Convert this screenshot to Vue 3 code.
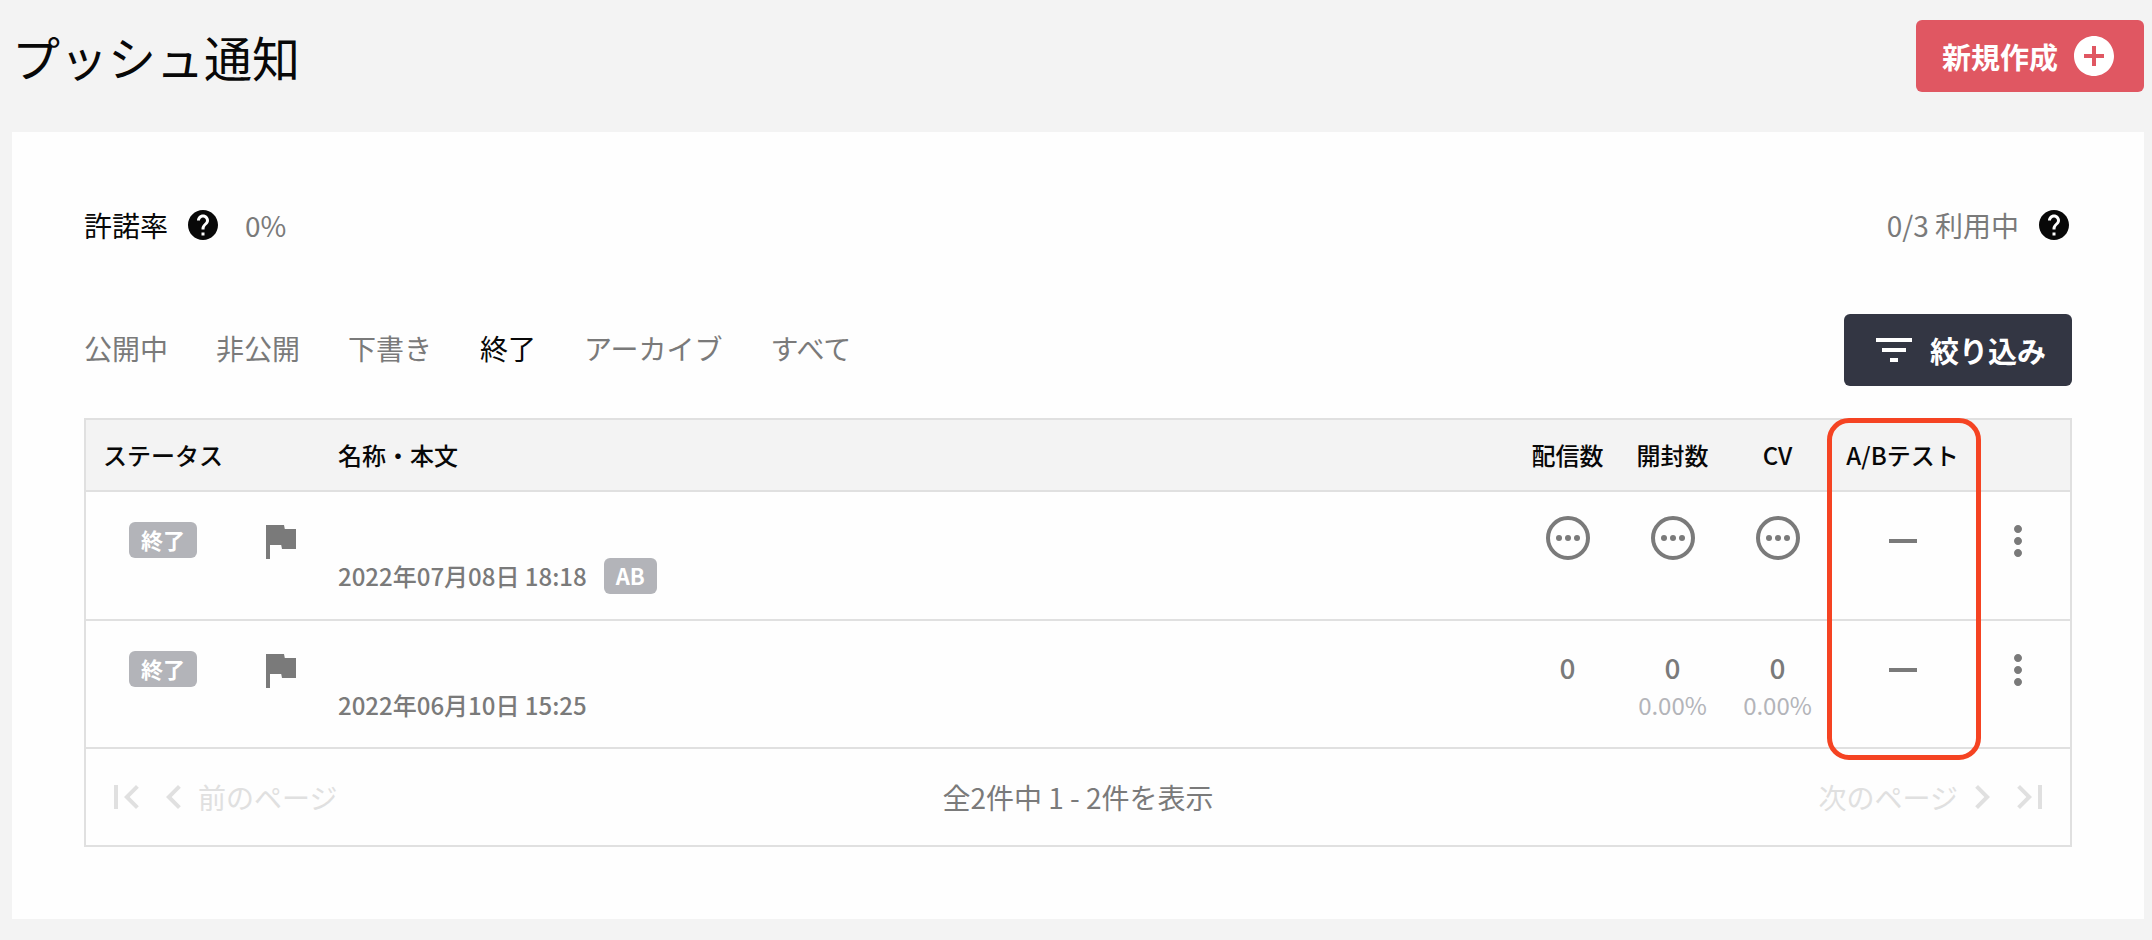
<script setup>
import { ref } from 'vue'

const tabs = ['公開中', '非公開', '下書き', '終了', 'アーカイブ', 'すべて']
const activeTab = ref('終了')

const rows = [
  {
    id: 1,
    status: '終了',
    date: '2022年07月08日 18:18',
    ab: true,
    counts: [
      { pending: true },
      { pending: true },
      { pending: true }
    ]
  },
  {
    id: 2,
    status: '終了',
    date: '2022年06月10日 15:25',
    ab: false,
    counts: [
      { value: '0' },
      { value: '0', rate: '0.00%' },
      { value: '0', rate: '0.00%' }
    ]
  }
]

function selectTab(tab){
  activeTab.value = tab
}
</script>


<template>

<div class="page">

  <header class="page-header">

    <h1>プッシュ通知</h1>

    <button type="button" class="btn btn-create">
      新規作成
      <svg class="icon" viewBox="0 0 24 24">
        <path d="M12 2C6.48 2 2 6.48 2 12s4.48 10 10 10 10-4.48 10-10S17.52 2 12 2zm5 11h-4v4h-2v-4H7v-2h4V7h2v4h4v2z"/>
      </svg>
    </button>

  </header>

  <main class="card">

    <div class="summary">

      <div class="summary-item">
        <span class="summary-label">許諾率</span>
        <svg class="icon-help" viewBox="0 0 24 24">
          <path d="M12 2C6.48 2 2 6.48 2 12s4.48 10 10 10 10-4.48 10-10S17.52 2 12 2zm1 17h-2v-2h2v2zm2.07-7.75l-.9.92C13.45 12.9 13 13.5 13 15h-2v-.5c0-1.1.45-2.1 1.17-2.83l1.24-1.26c.37-.36.59-.86.59-1.41 0-1.1-.9-2-2-2s-2 .9-2 2H8c0-2.21 1.79-4 4-4s4 1.79 4 4c0 .88-.36 1.68-.93 2.25z"/>
        </svg>
        <span class="summary-rate">0%</span>
      </div>

      <div class="summary-item">
        <span>0/3 利用中</span>
        <svg class="icon-help" viewBox="0 0 24 24">
          <path d="M12 2C6.48 2 2 6.48 2 12s4.48 10 10 10 10-4.48 10-10S17.52 2 12 2zm1 17h-2v-2h2v2zm2.07-7.75l-.9.92C13.45 12.9 13 13.5 13 15h-2v-.5c0-1.1.45-2.1 1.17-2.83l1.24-1.26c.37-.36.59-.86.59-1.41 0-1.1-.9-2-2-2s-2 .9-2 2H8c0-2.21 1.79-4 4-4s4 1.79 4 4c0 .88-.36 1.68-.93 2.25z"/>
        </svg>
      </div>

    </div>

    <div class="toolbar">

      <nav class="tabs">
        <button
          v-for="tab in tabs"
          :key="tab"
          type="button"
          :class="{ active: tab === activeTab }"
          @click="selectTab(tab)"
        >{{ tab }}</button>
      </nav>

      <button type="button" class="btn btn-filter">
        <svg class="icon" viewBox="0 0 24 24">
          <path d="M10 18h4v-2h-4v2zM3 6v2h18V6H3zm3 7h12v-2H6v2z"/>
        </svg>
        絞り込み
      </button>

    </div>

    <div class="list">

      <table>
        <thead>
          <tr>
            <th class="col-status">ステータス</th>
            <th class="col-flag"></th>
            <th class="col-name">名称・本文</th>
            <th class="col-count">配信数</th>
            <th class="col-count">開封数</th>
            <th class="col-count">CV</th>
            <th class="col-ab">A/Bテスト</th>
            <th class="col-menu"></th>
          </tr>
        </thead>
        <tbody>
          <tr v-for="row in rows" :key="row.id">
            <td class="cell-status">
              <span class="badge">{{ row.status }}</span>
            </td>
            <td class="cell-icon">
              <svg class="icon" viewBox="0 0 24 24">
                <path d="M14.4 6L14 4H5v17h2v-7h5.6l.4 2h7V6z"/>
              </svg>
            </td>
            <td class="col-name">
              <div class="name"></div>
              <div class="date">
                {{ row.date }}
                <span v-if="row.ab" class="badge">AB</span>
              </div>
            </td>
            <td v-for="(count, i) in row.counts" :key="i">
              <div class="count">
                <svg v-if="count.pending" class="icon-pending" viewBox="0 0 44 44">
                  <circle cx="22" cy="22" r="20" fill="none" stroke="currentColor" stroke-width="4"/>
                  <circle cx="13" cy="22" r="3"/>
                  <circle cx="22" cy="22" r="3"/>
                  <circle cx="31" cy="22" r="3"/>
                </svg>
                <template v-else>{{ count.value }}</template>
              </div>
              <div v-if="count.rate" class="rate">{{ count.rate }}</div>
            </td>
            <td class="cell-icon">
              <svg class="icon" viewBox="0 0 24 24">
                <path d="M19 13H5v-2h14v2z"/>
              </svg>
            </td>
            <td class="col-menu">
              <button type="button" aria-label="メニュー">
                <svg class="icon" viewBox="0 0 24 24">
                  <path d="M12 8c1.1 0 2-.9 2-2s-.9-2-2-2-2 .9-2 2 .9 2 2 2zm0 2c-1.1 0-2 .9-2 2s.9 2 2 2 2-.9 2-2-.9-2-2-2zm0 6c-1.1 0-2 .9-2 2s.9 2 2 2 2-.9 2-2-.9-2-2-2z"/>
                </svg>
              </button>
            </td>
          </tr>
        </tbody>
      </table>

      <footer class="pager">

        <div class="pager-side">
          <button type="button" disabled aria-label="最初のページ">
            <svg class="icon" viewBox="0 0 24 24">
              <path d="M18.41 16.59L13.82 12l4.59-4.59L17 6l-6 6 6 6zM6 6h2v12H6z"/>
            </svg>
          </button>
          <button type="button" disabled>
            <svg class="icon" viewBox="0 0 24 24">
              <path d="M15.41 7.41L14 6l-6 6 6 6 1.41-1.41L10.83 12z"/>
            </svg>
            前のページ
          </button>
        </div>

        <span>全2件中 1 - 2件を表示</span>

        <div class="pager-side pager-next">
          <button type="button" disabled>
            次のページ
            <svg class="icon" viewBox="0 0 24 24">
              <path d="M10 6L8.59 7.41 13.17 12l-4.58 4.59L10 18l6-6z"/>
            </svg>
          </button>
          <button type="button" disabled aria-label="最後のページ">
            <svg class="icon" viewBox="0 0 24 24">
              <path d="M5.59 7.41L10.18 12l-4.59 4.59L7 18l6-6-6-6zM16 6h2v12h-2z"/>
            </svg>
          </button>
        </div>

      </footer>

      <!-- A/Bテスト列の強調枠 -->
      <div class="highlight"></div>

    </div>

  </main>

</div>

</template>


<style>
body{
  margin:0;
  background:#f3f3f3;
}
</style>

<style scoped>

.page{
  padding:20px 8px 21px 12px;
  font-family:"Noto Sans CJK JP", sans-serif;
  font-size:28px;
  line-height:40px;
  color:#7a7a7a;
}

button{
  padding:0;
  border:none;
  background:none;
  font:inherit;
  color:inherit;
  cursor:pointer;
}

svg{
  display:block;
  flex:none;
  fill:currentColor;
}

.icon{
  width:48px;
  height:48px;
}

.icon-help{
  width:36px;
  height:36px;
  color:#080808;
}

.icon-pending{
  width:44px;
  height:44px;
}

.page-header{
  display:flex;
  justify-content:space-between;
  align-items:center;
  margin-bottom:40px;
}

h1{
  margin:0;
  font-size:48px;
  font-weight:400;
  line-height:72px;
  color:#080808;
}

.btn{
  display:flex;
  align-items:center;
  gap:12px;
  height:72px;
  padding:0 26px;
  border-radius:6px;
  font-size:29px;
  font-weight:700;
  color:#fff;
}

.btn-create{
  background:#e05762;
}

.btn-filter{
  background:#333643;
}

.card{
  padding:72px;
  background:#fefefe;
}

.summary{
  display:flex;
  justify-content:space-between;
  margin-bottom:68px;
}

.summary-item{
  display:flex;
  align-items:center;
  gap:17px;
  height:42px;
}

.summary-label{
  color:#080808;
}

.summary-rate{
  padding-left:7px;
}

.toolbar{
  display:flex;
  justify-content:space-between;
  align-items:center;
  margin-bottom:32px;
}

.tabs{
  display:flex;
  gap:48px;
  padding-bottom:4px;
}

.tabs .active{
  color:#080808;
}

.list{
  position:relative;
  border:2px solid #e0e0e0;
}

table{
  width:100%;
  border-spacing:0;
  table-layout:fixed;
}

th,
td{
  padding:0;
  border-bottom:2px solid #e0e0e0;
  text-align:center;
}

th{
  height:70px;
  background:#f3f3f3;
  font-size:24px;
  font-weight:500;
  color:#080808;
}

td{
  height:102px;
  padding-top:25px;
  vertical-align:top;
  font-weight:500;
}

tr:last-child td{
  height:101px;
}

.col-status{
  width:154px;
}

.col-flag{
  width:80px;
}

.col-name{
  padding-left:18px;
  text-align:left;
}

.col-count{
  width:105px;
}

.col-ab{
  width:145px;
}

.col-menu{
  width:85px;
  padding-right:10px;
}

.cell-status .badge{
  margin-top:4px;
}

.cell-icon svg{
  margin:0 auto;
}

.badge{
  display:inline-block;
  padding:0 12px 2px;
  border-radius:6px;
  background:#b3b4b9;
  font-size:22px;
  font-weight:700;
  line-height:34px;
  color:#fff;
}

.name{
  height:40px;
}

.date{
  display:flex;
  align-items:center;
  gap:17px;
  height:38px;
  font-size:24px;
}

.count{
  display:flex;
  justify-content:center;
  align-items:center;
  height:42px;
}

.rate{
  font-size:24px;
  font-weight:400;
  line-height:34px;
  color:#b3b4b9;
}

.pager{
  display:grid;
  grid-template-columns:1fr auto 1fr;
  align-items:center;
  height:96px;
  padding:0 16px;
}

.pager-side,
.pager-side button{
  display:flex;
  align-items:center;
}

.pager-side button{
  color:#e0e0e0;
  cursor:default;
}

.pager-next{
  justify-content:flex-end;
}

.highlight{
  position:absolute;
  top:-2px;
  right:89px;
  bottom:85px;
  width:144px;
  border:5px solid #f54322;
  border-radius:22px;
  pointer-events:none;
}

</style>
